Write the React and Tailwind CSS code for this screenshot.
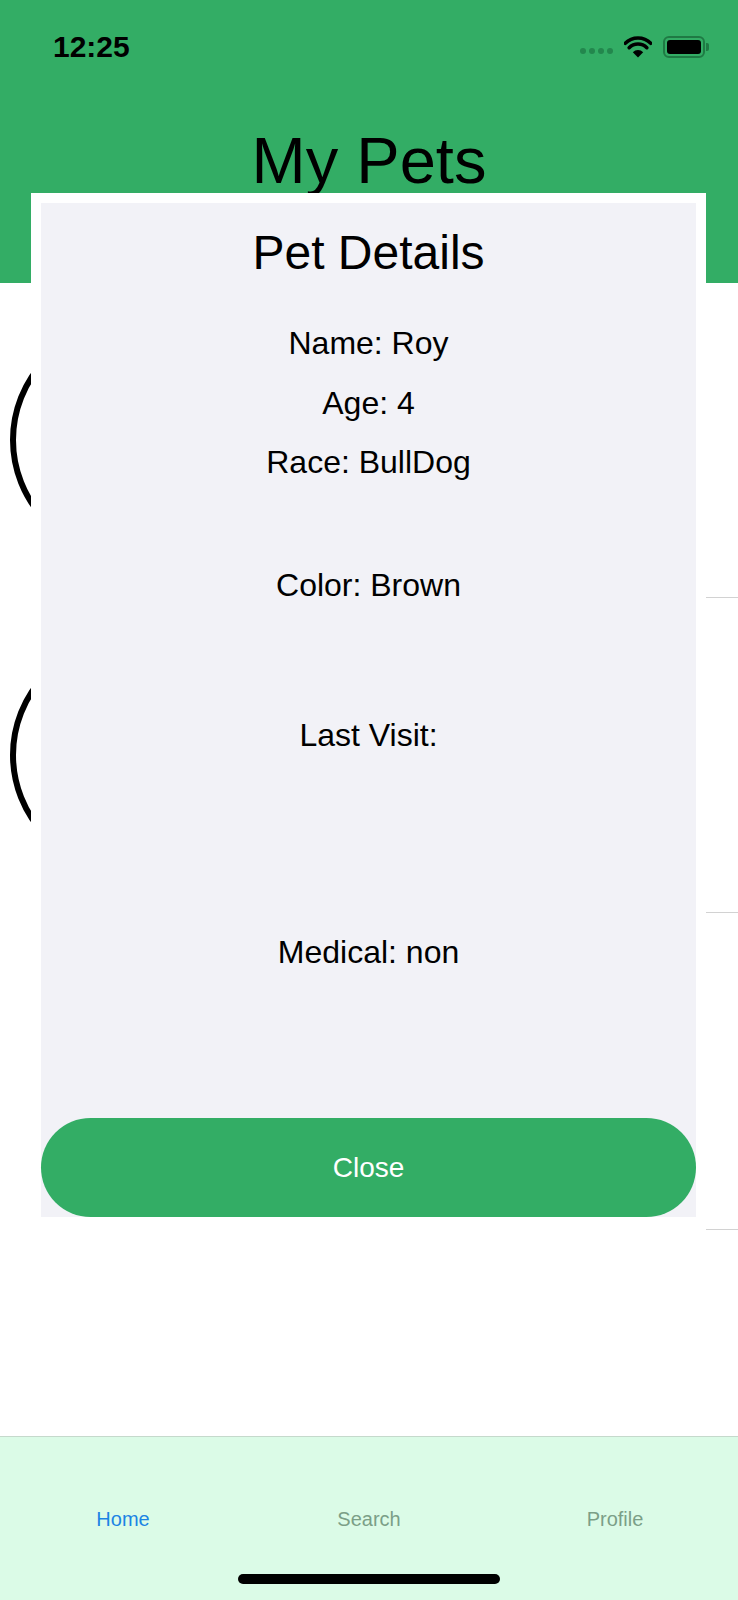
import React from "react";

const pet = {
  name: "Roy",
  age: 4,
  race: "BullDog",
  color: "Brown",
  lastVisit: "",
  medical: "non",
};

const StatusBar = () => (
  <div className="flex items-center justify-between pt-[29px] pl-[53px] pr-[29px] h-[65px]">
    <span className="text-[30px] leading-[36px] font-bold text-black">12:25</span>
    <div className="flex items-center">
      <div className="flex items-center gap-[3px] mt-[8px]">
        <span className="w-[6px] h-[6px] rounded-full bg-[#23874d]"></span>
        <span className="w-[6px] h-[6px] rounded-full bg-[#23874d]"></span>
        <span className="w-[6px] h-[6px] rounded-full bg-[#23874d]"></span>
        <span className="w-[6px] h-[6px] rounded-full bg-[#23874d]"></span>
      </div>
      <svg width="28" height="22" viewBox="0 0 28 22" className="ml-[11px]">
        <path d="M1.27 7.27A18 18 0 0 1 26.73 7.27" fill="none" stroke="#000" strokeWidth="3.6" strokeLinecap="round" />
        <path d="M5.16 11.66A12.5 12.5 0 0 1 22.84 11.66" fill="none" stroke="#000" strokeWidth="3.6" strokeLinecap="round" />
        <path d="M14 21.5L8.8 16.2A7.3 7.3 0 0 1 19.2 16.2Z" fill="#000" />
      </svg>
      <div className="flex items-center ml-[11px]">
        <div className="w-[42px] h-[22px] rounded-[6px] border-2 border-[#1f7a44] p-[2px]">
          <div className="w-full h-full rounded-[3px] bg-black"></div>
        </div>
        <div className="w-[3px] h-[8px] rounded-r-[2px] bg-[#1f7a44] ml-[1px]"></div>
      </div>
    </div>
  </div>
);

const PetRow = ({ withAvatar, height }) => (
  <div className={`flex flex-col ${height}`}>
    <div className="flex-1 flex items-center pl-[10px]">
      {withAvatar && (
        <div className="w-[236px] h-[236px] rounded-full border-[6px] border-black"></div>
      )}
    </div>
    <div className="ml-[40px] h-px bg-[#d2d2d2]"></div>
  </div>
);

const DetailLine = ({ className, children }) => (
  <p className={`text-[32px] leading-[38px] text-black ${className}`}>{children}</p>
);

const PetDetailsModal = () => (
  <div className="absolute top-[193px] left-[31px] w-[675px] bg-white px-[10px] pt-[10px] pb-[20px]">
    <div className="h-[1014px] bg-[#f2f2f7] flex flex-col items-center text-center pt-[22px]">
      <h2 className="text-[48px] leading-[56px] text-black">Pet Details</h2>
      <DetailLine className="mt-[43px]">Name: {pet.name}</DetailLine>
      <DetailLine className="mt-[22px]">Age: {pet.age}</DetailLine>
      <DetailLine className="mt-[21px]">Race: {pet.race}</DetailLine>
      <DetailLine className="mt-[85px]">Color: {pet.color}</DetailLine>
      <DetailLine className="mt-[112px]">Last Visit: {pet.lastVisit}</DetailLine>
      <DetailLine className="mt-[179px]">Medical: {pet.medical}</DetailLine>
      <button className="mt-auto w-full h-[99px] rounded-full bg-[#33ad65] text-white text-[28px] leading-[34px]">
        Close
      </button>
    </div>
  </div>
);

const TabBar = () => (
  <div className="h-[164px] border-t border-[#c5d9cc] bg-[#dbfbe7] flex flex-col">
    <div className="grid grid-cols-3 pt-[70px]">
      <span className="text-center text-[20px] leading-[24px] text-[#1b84e4]">Home</span>
      <span className="text-center text-[20px] leading-[24px] text-[#7b9f87]">Search</span>
      <span className="text-center text-[20px] leading-[24px] text-[#7b9f87]">Profile</span>
    </div>
    <div className="mt-[43px] mx-auto w-[262px] h-[10px] rounded-full bg-black"></div>
  </div>
);

export default function App() {
  return (
    <div className="relative w-full h-[1600px] bg-white flex flex-col overflow-hidden font-['Liberation_Sans',Arial,sans-serif]">
      <div className="h-[283px] bg-[#33ad65] flex flex-col">
        <StatusBar />
        <h1 className="mt-[58px] text-center text-[65px] leading-[76px] text-black">My Pets</h1>
      </div>

      <div className="flex-1 flex flex-col">
        <PetRow withAvatar height="h-[315px]" />
        <PetRow withAvatar height="h-[315px]" />
        <PetRow height="h-[317px]" />
      </div>

      <TabBar />

      <PetDetailsModal />
    </div>
  );
}
